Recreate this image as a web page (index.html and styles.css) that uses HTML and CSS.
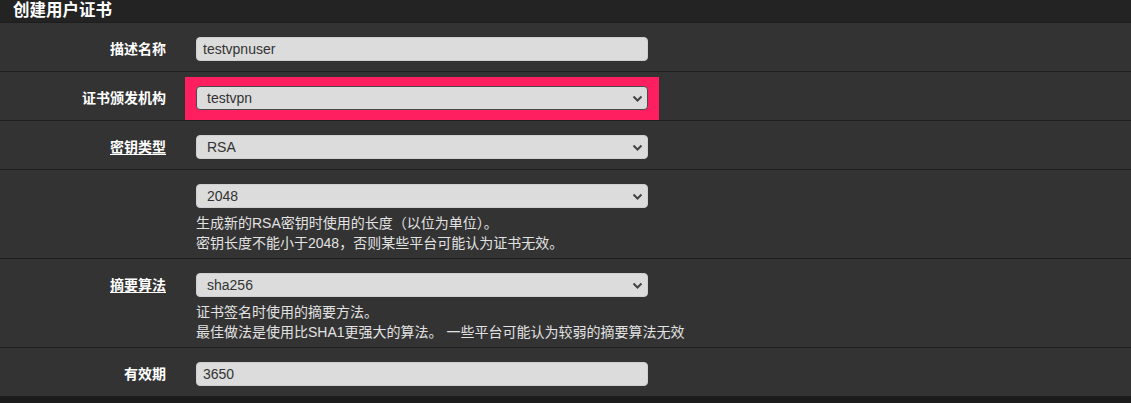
FILE: index.html
```html
<!DOCTYPE html>
<html lang="zh-CN">
<head>
<meta charset="utf-8">
<title>创建用户证书</title>
<link rel="stylesheet" href="styles.css">
</head>
<body>
<div class="panel">
  <div class="panel-heading">创建用户证书</div>
  <div class="panel-body">
    <div class="row">
      <div class="label">描述名称</div>
      <div class="field">
        <input class="control" type="text" value="testvpnuser">
      </div>
    </div>
    <div class="row">
      <div class="label">证书颁发机构</div>
      <div class="field">
        <span class="highlight"></span>
        <div class="select-wrap">
          <select class="control select dark-border"><option>testvpn</option></select>
          <svg class="chev" width="11" height="7" viewBox="0 0 11 7"><path d="M1.5 1.5l4 4 4-4" fill="none" stroke="#444" stroke-width="2"/></svg>
        </div>
      </div>
    </div>
    <div class="row">
      <div class="label"><span class="u">密钥类型</span></div>
      <div class="field">
        <div class="select-wrap">
          <select class="control select"><option>RSA</option></select>
          <svg class="chev" width="11" height="7" viewBox="0 0 11 7"><path d="M1.5 1.5l4 4 4-4" fill="none" stroke="#444" stroke-width="2"/></svg>
        </div>
      </div>
    </div>
    <div class="row has-help">
      <div class="label"></div>
      <div class="field">
        <div class="select-wrap">
          <select class="control select"><option>2048</option></select>
          <svg class="chev" width="11" height="7" viewBox="0 0 11 7"><path d="M1.5 1.5l4 4 4-4" fill="none" stroke="#444" stroke-width="2"/></svg>
        </div>
        <div class="help">生成新的RSA密钥时使用的长度（以位为单位）。<br>密钥长度不能小于2048，否则某些平台可能认为证书无效。</div>
      </div>
    </div>
    <div class="row has-help">
      <div class="label"><span class="u">摘要算法</span></div>
      <div class="field">
        <div class="select-wrap">
          <select class="control select"><option>sha256</option></select>
          <svg class="chev" width="11" height="7" viewBox="0 0 11 7"><path d="M1.5 1.5l4 4 4-4" fill="none" stroke="#444" stroke-width="2"/></svg>
        </div>
        <div class="help">证书签名时使用的摘要方法。<br>最佳做法是使用比SHA1更强大的算法。 一些平台可能认为较弱的摘要算法无效</div>
      </div>
    </div>
    <div class="row">
      <div class="label">有效期</div>
      <div class="field">
        <input class="control" type="text" value="3650">
      </div>
    </div>
  </div>
</div>
</body>
</html>
```
FILE: styles.css
```css
html, body {
  margin: 0;
  padding: 0;
  background: #1c1c1c;
  font-family: "Liberation Sans", "Noto Sans CJK SC", sans-serif;
  font-size: 14px;
  color: #fff;
}

.panel {
  background: #333333;
}

.panel-heading {
  height: 22px;
  line-height: 20px;
  padding-left: 13px;
  background: #232323;
  border-bottom: 1px solid #1e1e1e;
  font-size: 16.5px;
  font-weight: bold;
  color: #fff;
  box-sizing: content-box;
}

.row {
  display: grid;
  grid-template-columns: 166px 452px;
  column-gap: 30px;
  padding: 14px 0 10px;
  border-bottom: 1px solid #1e1e1e;
  background: #333333;
}

.row.has-help {
  padding-bottom: 5px;
}

.label {
  text-align: right;
  font-weight: bold;
  line-height: 24px;
  font-size: 14px;
  color: #fff;
}

.u {
  text-decoration: underline;
  text-underline-offset: 2px;
}

.field {
  position: relative;
}

.highlight {
  position: absolute;
  left: -11px;
  right: -11px;
  top: -9px;
  bottom: -10px;
  background: #fe1f61;
  z-index: 0;
}

.control {
  display: block;
  width: 100%;
  height: 24px;
  box-sizing: border-box;
  margin: 0;
  border: 1px solid #cfcfcf;
  border-radius: 4px;
  background: #dcdcdc;
  color: #333;
  font-family: "Liberation Sans", "Noto Sans CJK SC", sans-serif;
  font-size: 14px;
  padding: 0 6px;
  outline: none;
}

.select-wrap {
  position: relative;
  z-index: 1;
}

.select {
  -webkit-appearance: none;
  appearance: none;
  padding: 0 10px;
}

.dark-border {
  border-color: #4a4a4a;
}

.chev {
  position: absolute;
  right: 5px;
  top: 9px;
  pointer-events: none;
}

.help {
  margin-top: 5px;
  line-height: 20px;
  font-size: 14px;
  color: #e2e2e2;
  white-space: nowrap;
}
```
